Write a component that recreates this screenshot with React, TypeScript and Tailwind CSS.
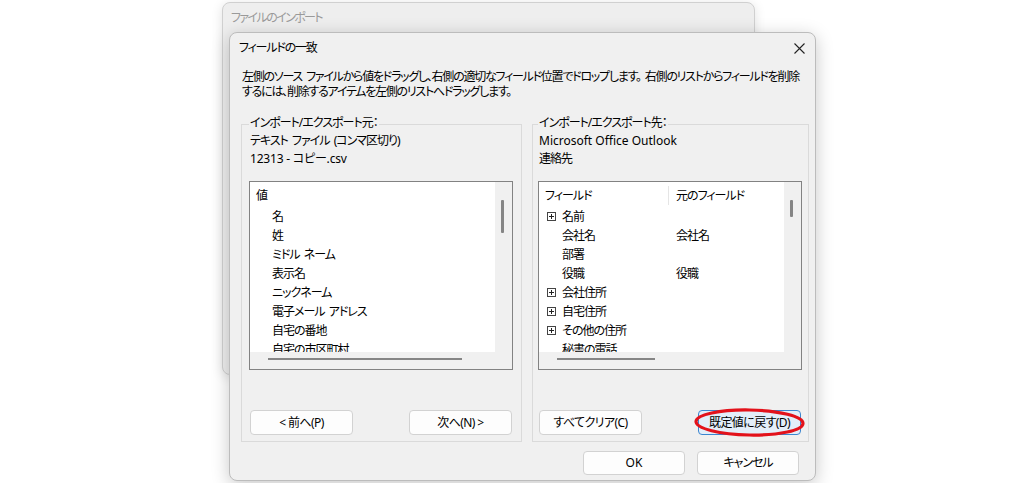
import React from "react";

function PlusBox() {
  return (
    <svg width="9" height="9" viewBox="0 0 9 9" className="shrink-0">
      <rect x="0.5" y="0.5" width="8" height="8" fill="white" stroke="#444" strokeWidth="1" />
      <path d="M2 4.5 H7 M4.5 2 V7" stroke="#222" strokeWidth="1" />
    </svg>
  );
}

function Sp() {
  return <span className="tracking-[1px]"> </span>;
}

function Btn({ children, primary }: { children: React.ReactNode; primary?: boolean }) {
  return (
    <div
      className={
        primary
          ? "w-[103px] h-[25px] flex items-center justify-center rounded-[4px] border border-[#3c86cf] bg-[#e3eef9] tracking-[-0.6px]"
          : "w-[103px] h-[25px] flex items-center justify-center rounded-[4px] border border-[#d2d2d2] bg-[#fdfdfd] tracking-[-0.6px]"
      }
    >
      <span className="whitespace-pre">{children}</span>
    </div>
  );
}

function ListBox({
  children,
  header,
  vThumbH,
  hThumbW,
}: {
  children: React.ReactNode;
  header: React.ReactNode;
  vThumbH: number;
  hThumbW: number;
}) {
  return (
    <div className="w-[264px] h-[189px] border border-[#828282] bg-white flex flex-col">
      <div className="flex h-[170px]">
        <div className="flex-1 overflow-hidden pt-[4px]">
          {header}
          <div className="mt-[2px]">{children}</div>
        </div>
        <div className="w-[17px] bg-[#f0f0f0] pt-[18px] pl-[6px]">
          <div className="w-[3px] bg-[#858585] rounded-[1px]" style={{ height: vThumbH }} />
        </div>
      </div>
      <div className="h-[17px] bg-[#f0f0f0] pt-[6px] pl-[18px]">
        <div className="h-[2px] bg-[#858585]" style={{ width: hThumbW }} />
      </div>
    </div>
  );
}

export default function App() {
  const leftItems: React.ReactNode[] = [
    "名",
    "姓",
    <>ミドル<Sp />ネーム</>,
    "表示名",
    "ニックネーム",
    <>電子メール<Sp />アドレス</>,
    "自宅の番地",
    "自宅の市区町村",
  ];
  const rightItems: [boolean, string, string][] = [
    [true, "名前", ""],
    [false, "会社名", "会社名"],
    [false, "部署", ""],
    [false, "役職", "役職"],
    [true, "会社住所", ""],
    [true, "自宅住所", ""],
    [true, "その他の住所", ""],
    [false, "秘書の電話", ""],
  ];
  return (
    <div className="relative w-[1024px] h-[483px] bg-white overflow-hidden font-['Noto_Sans','Noto_Sans_CJK_JP',sans-serif] [font-feature-settings:'palt'] text-[12px] tracking-[-1px] text-black">
      {/* background window */}
      <div className="absolute left-[222px] top-[2px] w-[533px] h-[373px] rounded-[8px] border border-[#d0d0d0] bg-[#eeeeee] shadow-[0_2px_12px_rgba(0,0,0,0.12)]">
        <div className="pl-[8px] pt-[6px] leading-[18px] text-[#9a9a9a] tracking-[-1.6px]">ファイルのインポート</div>
      </div>

      {/* front dialog */}
      <div className="absolute left-[229px] top-[32px] w-[587px] h-[449px] rounded-[8px] border border-[#bcbcbc] bg-[#f0f0f0] shadow-[0_4px_18px_rgba(0,0,0,0.22)] flex flex-col">
        <div className="h-[30px] flex items-center justify-between pl-[9px] pr-[10px]">
          <span className="leading-[18px] tracking-[-1.2px]">フィールドの一致</span>
          <svg width="11" height="11" viewBox="0 0 11 11">
            <path d="M0.5 0.5 L10.5 10.5 M10.5 0.5 L0.5 10.5" stroke="#222" strokeWidth="1.1" />
          </svg>
        </div>
        <div className="pl-[12px] mt-[6px] leading-[15px] whitespace-nowrap tracking-[-1.25px]">
          左側のソース<Sp />ファイルから値をドラッグし、右側の適切なフィールド位置でドロップします。<Sp />右側のリストからフィールドを削除
          <br />
          するには、削除するアイテムを左側のリストへドラッグします。
        </div>

        <div className="flex pl-[11px] mt-[25px] gap-[10px]">
          {/* left group */}
          <div className="w-[281px] h-[318px] border border-[#dadada] pl-[7px] flex flex-col">
            <div className="-mt-[11px] leading-[18px] w-fit bg-[#f0f0f0] px-[1px]">インポート/エクスポート元：</div>
            <div className="leading-[18px] pl-[1px]">
              テキスト<Sp />ファイル<Sp />(コンマ区切り)
            </div>
            <div className="leading-[18px] pl-[1px] tracking-[-0.2px]">12313 - コピー.csv</div>
            <div className="mt-[13px]">
              <ListBox header={<div className="h-[19px] leading-[19px] pl-[6px]">値</div>} vThumbH={33} hThumbW={194}>
                {leftItems.map((t, i) => (
                  <div key={i} className="h-[19px] leading-[19px] pl-[22px] whitespace-nowrap">
                    {t}
                  </div>
                ))}
              </ListBox>
            </div>
            <div className="mt-[40px] w-[264px] px-[1px] flex justify-between">
              <Btn>{"< 前へ(P)"}</Btn>
              <Btn>{"次へ(N) >"}</Btn>
            </div>
          </div>

          {/* right group */}
          <div className="w-[277px] h-[318px] border border-[#dadada] pl-[5px] flex flex-col">
            <div className="-mt-[11px] leading-[18px] w-fit bg-[#f0f0f0] px-[1px]">インポート/エクスポート先：</div>
            <div className="leading-[18px] pl-[1px] tracking-normal">Microsoft Office Outlook</div>
            <div className="leading-[18px] pl-[1px]">連絡先</div>
            <div className="mt-[13px]">
              <ListBox
                header={
                  <div className="flex h-[19px] leading-[19px]">
                    <div className="w-[130px] pl-[6px] border-r border-[#e5e5e5]">フィールド</div>
                    <div className="pl-[7px]">元のフィールド</div>
                  </div>
                }
                vThumbH={17}
                hThumbW={98}
              >
                {rightItems.map(([exp, a, b]) => (
                  <div key={a} className="flex h-[19px] leading-[19px] whitespace-nowrap">
                    <div className="w-[130px] flex items-center pl-[8px] gap-[6px]">
                      {exp ? <PlusBox /> : <span className="w-[9px] shrink-0" />}
                      <span>{a}</span>
                    </div>
                    <div className="pl-[7px]">{b}</div>
                  </div>
                ))}
              </ListBox>
            </div>
            <div className="mt-[40px] w-[264px] px-[1px] flex justify-between">
              <Btn>すべてクリア(C)</Btn>
              <div className="relative">
                <Btn primary>既定値に戻す(D)</Btn>
                <svg className="absolute left-[-4px] top-[-3px] pointer-events-none" width="112" height="31" viewBox="0 0 112 31">
                  <ellipse cx="55.5" cy="15.5" rx="53.5" ry="12.5" fill="none" stroke="#e3121b" strokeWidth="3.2" transform="rotate(1 55.5 15.5)" />
                </svg>
              </div>
            </div>
          </div>
        </div>

        <div className="flex justify-end gap-[12px] pr-[16px] mt-[9px]">
          <div className="w-[102px] h-[24px] flex items-center justify-center rounded-[4px] border border-[#d2d2d2] bg-[#fdfdfd] tracking-normal">OK</div>
          <div className="w-[102px] h-[24px] flex items-center justify-center rounded-[4px] border border-[#d2d2d2] bg-[#fdfdfd]">キャンセル</div>
        </div>
      </div>
    </div>
  );
}
